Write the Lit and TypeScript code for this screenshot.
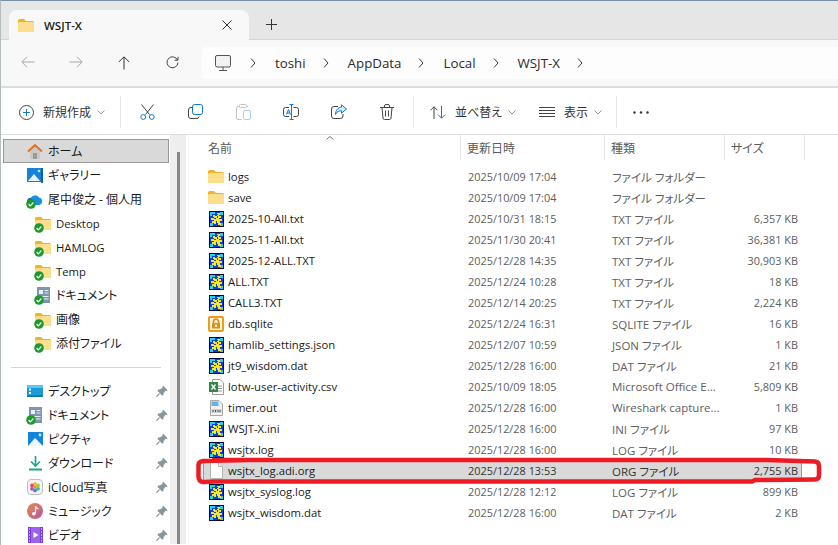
import { LitElement, html, css, TemplateResult } from "lit";
import { customElement } from "lit/decorators.js";

const folder = (w = 16, h = 13) => html`<svg class="ic" width=${w} height=${h} viewBox="0 0 16 13">
  <path d="M0 1.500Q0 0 1.500 0H6L8 2H14.500Q16 2 16 3.500V11.500Q16 13 14.500 13H1.500Q0 13 0 11.500Z" fill="#f0b429"/>
  <path d="M0 4.500Q0 3 1.500 3H14.500Q16 3 16 4.500V11.500Q16 13 14.500 13H1.500Q0 13 0 11.500Z" fill="#fcdf8d"/>
</svg>`;

const check = html`<svg class="chk" width="10" height="10" viewBox="0 0 10 10">
  <circle cx="5" cy="5" r="4.800" fill="#1c9a2c"/>
  <path d="M2.600 5.200L4.300 6.800L7.400 3.500" fill="none" stroke="#fff" stroke-width="1.200"/>
</svg>`;

const wsjt = html`<svg class="ic" width="15" height="16" viewBox="0 0 15 16" shape-rendering="crispEdges">
  <rect width="15" height="16" fill="#02023c"/>
  <rect x="1" y="1" width="13" height="14" fill="#0d3fe0"/>
  <rect x="1" y="1" width="5" height="2" fill="#20d6e6"/>
  <rect x="1" y="3" width="2" height="2" fill="#20d6e6"/>
  <rect x="11" y="1" width="3" height="3" fill="#20d6e6"/>
  <rect x="11" y="12" width="3" height="3" fill="#20d6e6"/>
  <rect x="1" y="12" width="3" height="3" fill="#20d6e6"/>
  <path d="M8 2h3v2h-1v1h2v2h-2v1h3v2h-2v2h1v2h-3v-2h-1v-2h-1v3h-2v-1h-2v-2h2v-1h-3v-2h3v-1h-1v-2h2v1h2v-1h1z" fill="#f7e81e"/>
  <rect x="5" y="7" width="2" height="1" fill="#0d3fe0"/>
  <rect x="8" y="5" width="1" height="2" fill="#0d3fe0"/>
</svg>`;

const sqlite = html`<svg class="ic" width="16" height="16" viewBox="0 0 16 16">
  <rect x="1" y="1" width="14" height="14" rx="1" fill="#fff6e2" stroke="#ee9d16" stroke-width="2"/>
  <path d="M5.500 7.500V5.500a2.500 2.500 0 0 1 5 0V7.500" fill="none" stroke="#d98a10" stroke-width="1.600"/>
  <rect x="4" y="7" width="8" height="5.500" fill="#e0920f"/>
  <rect x="7" y="8.500" width="2" height="2.500" fill="#fff6e2"/>
</svg>`;

const excel = html`<svg class="ic" width="15" height="16" viewBox="0 0 15 16">
  <path d="M3.500.5H11L14.500 4V15.500H3.500Z" fill="#fff" stroke="#9a9a9a"/>
  <path d="M9 7h4M9 9.500h4M9 12h4" stroke="#9a9a9a"/>
  <rect x="0" y="3" width="9" height="10" fill="#2f8a45"/>
  <path d="M2.500 5.500L6.500 10.500M6.500 5.500L2.500 10.500" stroke="#fff" stroke-width="1.300"/>
</svg>`;

const binary = html`<svg class="ic" width="13" height="16" viewBox="0 0 13 16">
  <path d="M.5.5H9L12.500 4V15.500H.5Z" fill="#eef2f6" stroke="#a8a8a8"/>
  <path d="M1.500 1.500H8.500V6H1.500Z" fill="#6aaee6"/>
  <path d="M1.500 9H11.500V13H1.500Z" fill="#cfcfcf"/>
  <path d="M3 10v2M5.500 10v2M8 10v2M10 10v2" stroke="#555" stroke-width="1"/>
</svg>`;

const blank = html`<svg class="ic" width="13" height="17" viewBox="0 0 13 17">
  <path d="M.5.5H8.500L12.500 4.500V16.500H.5Z" fill="#fff" stroke="#b5b5b5"/>
  <path d="M8.500.5V4.500H12.500" fill="#f0f0f0" stroke="#b5b5b5"/>
</svg>`;

const home = html`<svg class="ic" width="16" height="15" viewBox="0 0 16 15">
  <path d="M3 7V15H13V7L8 2.500Z" fill="#c9c9c9"/>
  <rect x="6" y="9" width="4" height="6" fill="#9a9a9a"/>
  <path d="M1 7.500L8 1.200L15 7.500" fill="none" stroke="#e2711d" stroke-width="2"/>
</svg>`;

const gallery = html`<svg class="ic" width="16" height="16" viewBox="0 0 16 16">
  <rect width="16" height="14" y="1" fill="#1583d8"/>
  <rect x="14" y="1" width="2" height="15" fill="#0c5fa8"/>
  <path d="M1 14L7 7L13 14Z" fill="#eaf4fc"/>
  <circle cx="12" cy="4" r="1.300" fill="#cfe8fa"/>
</svg>`;

const cloud = html`<svg class="ic" width="16" height="11" viewBox="0 0 16 11">
  <path d="M4 11a3.500 3.500 0 0 1-.5-7A5 5 0 0 1 12 3.500a3.800 3.800 0 0 1 0 7.500Z" fill="#1b8fe6"/>
  <path d="M4 11a3.500 3.500 0 0 1-.5-7L7 8 5 11Z" fill="#1650b8"/>
</svg>`;

const docs = html`<svg class="ic" width="13" height="16" viewBox="0 0 13 16">
  <rect width="13" height="16" fill="#7d95ae"/>
  <rect x="2" y="3" width="4" height="4" fill="#e8eef4"/>
  <path d="M7.500 3.500h4M7.500 6h4M2 9.500h9.500M2 12h9.500" stroke="#e8eef4"/>
</svg>`;

const desktopIc = html`<svg class="ic" width="16" height="12" viewBox="0 0 16 12">
  <rect width="16" height="12" rx="1" fill="#1b9ad6"/>
  <rect y="0" width="16" height="3" fill="#5cc6ee"/>
  <rect x="2" y="3.500" width="2" height="2" fill="#fff"/>
  <rect x="2" y="7" width="2" height="2" fill="#fff"/>
  <rect y="10.500" width="16" height="1.500" fill="#0f6fa5"/>
</svg>`;

const pictures = html`<svg class="ic" width="15" height="14" viewBox="0 0 15 14">
  <rect width="15" height="14" fill="#1583d8"/>
  <path d="M0 14L7 6L15 14Z" fill="#eef6fc"/>
  <circle cx="12" cy="3" r="1.400" fill="#cfe8fa"/>
</svg>`;

const download = html`<svg class="ic" width="13" height="15" viewBox="0 0 13 15">
  <path d="M6.500 0V9M2 5.500L6.500 10L11 5.500" fill="none" stroke="#1ca58f" stroke-width="1.700"/>
  <rect y="12.500" width="13" height="2" fill="#1ca58f"/>
</svg>`;

const icloud = html`<svg class="ic" width="16" height="16" viewBox="0 0 16 16">
  <rect x=".5" y=".5" width="15" height="15" rx="3.500" fill="#f4f4f4" stroke="#bdbdbd"/>
  <circle cx="8" cy="4.800" r="1.900" fill="#f5b82e"/>
  <circle cx="11" cy="6.500" r="1.900" fill="#9ccb3c"/>
  <circle cx="11" cy="9.800" r="1.900" fill="#3fb6a8"/>
  <circle cx="8" cy="11.400" r="1.900" fill="#4f81d8"/>
  <circle cx="5" cy="9.800" r="1.900" fill="#9560c8"/>
  <circle cx="5" cy="6.500" r="1.900" fill="#e6486a"/>
  <circle cx="8" cy="8" r="1.500" fill="#f0803a"/>
</svg>`;

const music = html`<svg class="ic" width="16" height="16" viewBox="0 0 16 16">
  <defs><linearGradient id="mg" x1="0" y1="0" x2="1" y2="1"><stop offset="0" stop-color="#ea8a4f"/><stop offset="1" stop-color="#b0589a"/></linearGradient></defs>
  <circle cx="8" cy="8" r="8" fill="url(#mg)"/>
  <path d="M8.500 3.500V10.500" stroke="#fff" stroke-width="1.200"/>
  <path d="M8.500 3.500Q9.500 5.500 11.500 5.800" fill="none" stroke="#fff" stroke-width="1.200"/>
  <circle cx="6.800" cy="10.800" r="1.800" fill="#fff"/>
</svg>`;

const video = html`<svg class="ic" width="15" height="16" viewBox="0 0 15 16">
  <rect width="15" height="16" fill="#7a3fd6"/>
  <rect x="3" y="0" width="9" height="16" fill="#9a63ea"/>
  <path d="M5.500 5L10.500 8L5.500 11Z" fill="#fff"/>
  <path d="M1 2h1M1 5h1M1 8h1M1 11h1M1 14h1M13 2h1M13 5h1M13 8h1M13 11h1M13 14h1" stroke="#fff" stroke-width="1.200"/>
</svg>`;

const pin = html`<svg width="12" height="12" viewBox="0 0 12 12">
  <path d="M7 .5L11.700 5.200L10.500 6L9.500 5.800L7.500 8.300L7.500 10L6.300 10.800L1.300 5.800L2.200 4.600L4 4.600L6.600 2.600L6.400 1.500Z" fill="#8b959c"/>
  <path d="M3.500 8.600L.5 11.600" stroke="#8b959c" stroke-width="1.300"/>
</svg>`;

const chev = html`<svg class="chev" width="8" height="5" viewBox="0 0 8 5"><path d="M.5.500L4 4L7.500.500" fill="none" stroke="#9a9a9a"/></svg>`;
const crumbSep = html`<svg class="sep" width="6" height="10" viewBox="0 0 6 10"><path d="M1 .5L5 5L1 9.500" fill="none" stroke="#3a3a3a"/></svg>`;

interface Row { n: string; d: string; t: string; s: string; i: TemplateResult; sel?: boolean; }
const rows: Row[] = [
  { n: "logs", d: "2025/10/09 17:04", t: "ファイル フォルダー", s: "", i: folder() },
  { n: "save", d: "2025/10/09 17:04", t: "ファイル フォルダー", s: "", i: folder() },
  { n: "2025-10-All.txt", d: "2025/10/31 18:15", t: "TXT ファイル", s: "6,357 KB", i: wsjt },
  { n: "2025-11-All.txt", d: "2025/11/30 20:41", t: "TXT ファイル", s: "36,381 KB", i: wsjt },
  { n: "2025-12-ALL.TXT", d: "2025/12/28 14:35", t: "TXT ファイル", s: "30,903 KB", i: wsjt },
  { n: "ALL.TXT", d: "2025/12/24 10:28", t: "TXT ファイル", s: "18 KB", i: wsjt },
  { n: "CALL3.TXT", d: "2025/12/14 20:25", t: "TXT ファイル", s: "2,224 KB", i: wsjt },
  { n: "db.sqlite", d: "2025/12/24 16:31", t: "SQLITE ファイル", s: "16 KB", i: sqlite },
  { n: "hamlib_settings.json", d: "2025/12/07 10:59", t: "JSON ファイル", s: "1 KB", i: wsjt },
  { n: "jt9_wisdom.dat", d: "2025/12/28 16:00", t: "DAT ファイル", s: "21 KB", i: wsjt },
  { n: "lotw-user-activity.csv", d: "2025/10/09 18:05", t: "Microsoft Office E...", s: "5,809 KB", i: excel },
  { n: "timer.out", d: "2025/12/28 16:00", t: "Wireshark capture...", s: "1 KB", i: binary },
  { n: "WSJT-X.ini", d: "2025/12/28 16:00", t: "INI ファイル", s: "97 KB", i: wsjt },
  { n: "wsjtx.log", d: "2025/12/28 16:00", t: "LOG ファイル", s: "10 KB", i: wsjt },
  { n: "wsjtx_log.adi.org", d: "2025/12/28 13:53", t: "ORG ファイル", s: "2,755 KB", i: blank, sel: true },
  { n: "wsjtx_syslog.log", d: "2025/12/28 12:12", t: "LOG ファイル", s: "899 KB", i: wsjt },
  { n: "wsjtx_wisdom.dat", d: "2025/12/28 16:00", t: "DAT ファイル", s: "2 KB", i: wsjt },
];

interface Nav { n: string; i: TemplateResult; sub?: boolean; ok?: boolean; pin?: boolean; cur?: boolean; }
const navTop: Nav[] = [
  { n: "ホーム", i: home, cur: true },
  { n: "ギャラリー", i: gallery },
  { n: "尾中俊之 - 個人用", i: cloud, ok: true },
  { n: "Desktop", i: folder(), sub: true, ok: true },
  { n: "HAMLOG", i: folder(), sub: true, ok: true },
  { n: "Temp", i: folder(), sub: true, ok: true },
  { n: "ドキュメント", i: docs, sub: true, ok: true },
  { n: "画像", i: folder(), sub: true, ok: true },
  { n: "添付ファイル", i: folder(), sub: true, ok: true },
];
const navPins: Nav[] = [
  { n: "デスクトップ", i: desktopIc, pin: true },
  { n: "ドキュメント", i: docs, ok: true, pin: true },
  { n: "ピクチャ", i: pictures, pin: true },
  { n: "ダウンロード", i: download, pin: true },
  { n: "iCloud写真", i: icloud, pin: true },
  { n: "ミュージック", i: music, pin: true },
  { n: "ビデオ", i: video, pin: true },
];

@customElement("app-root")
export class AppRoot extends LitElement {
  static styles = css`
    :host {
      display: block; width: 838px; height: 545px; overflow: hidden; position: relative;
      background: #fff; color: #1a1a1a;
      font-family: "Open Sans", "Noto Sans CJK JP", sans-serif; font-size: 12px;
      font-feature-settings: "palt";
      box-sizing: border-box; border-top: 1px solid #7b90a5; border-left: 1px solid #b4bcbc;
    }
    svg { display: block; flex: none; }
    .tabs { height: 38px; background: #e6e6e6; border-bottom: 1px solid #d4d4d4; display: flex; align-items: flex-end; padding-left: 8px; box-sizing: content-box; }
    .tab { width: 240px; height: 30px; background: #f8f8f8; border-radius: 8px 8px 0 0; display: flex; align-items: center; padding: 0 17px 0 9px; box-sizing: border-box; margin-bottom: -1px; }
    .tab .title { margin-left: 10px; flex: 1; font-weight: 600; color: #222; font-size: 11.500px; }
    .plus { margin: 0 0 9px 17px; }
    .addr { height: 48px; background: #f8f8f8; border-bottom: 2px solid #dcdcdc; display: flex; align-items: center; box-sizing: border-box; }
    .navbtn { width: 48px; display: flex; justify-content: center; }
    .navs { display: flex; padding-left: 3px; width: 201px; box-sizing: border-box; }
    .crumbs { flex: 1; height: 32px; background: #fdfdfd; border-radius: 4px 0 0 4px; display: flex; align-items: center; padding-left: 13px; font-size: 13.300px; color: #2b2b2b; }
    .crumbs span { white-space: nowrap; }
    .crumbs .sep { margin: 0 19px 0 17px; }
    .crumbs .pc { margin-right: 2px; }
    .tools { height: 47px; border-bottom: 1px solid #dedede; display: flex; align-items: center; box-sizing: border-box; padding-top: 2px; white-space: nowrap; }
    .vsep { width: 1px; height: 32px; background: #e6e6e6; flex: none; }
    .new { display: flex; align-items: center; width: 119px; padding-left: 18px; box-sizing: border-box; color: #333; }
    .new .lbl { margin: 0 6px 0 9px; }
    .slots { display: flex; padding: 0 2px; }
    .slot { width: 48px; display: flex; justify-content: center; }
    .grp { display: flex; align-items: center; color: #333; }
    .grp .lbl { margin: 0 6px 0 9px; }
    .sort { margin-left: 16px; width: 109px; }
    .view { width: 77px; }
    .dots { margin-left: 16px; }
    .body { display: flex; height: 409px; overflow: hidden; }
    .side { width: 169px; flex: none; padding: 4px 0 0 2px; box-sizing: border-box; }
    .item { height: 24px; width: 166px; display: flex; align-items: center; box-sizing: border-box; padding-left: 24px; position: relative; white-space: nowrap; color: #1a1a1a; }
    .item.sub { padding-left: 32px; }
    .item.cur { background: #d9d9d9; border: 1px solid #999; padding-left: 23px; }
    .latin { font-size: 11.300px; }
    .iconbox { width: 16px; height: 16px; display: flex; align-items: center; justify-content: center; position: relative; flex: none; margin-right: 5px; }
    .chk { position: absolute; left: -1px; bottom: -2px; }
    .item .pin { position: absolute; right: 1px; top: 6px; }
    .hr { height: 1px; background: #d6d6d6; margin: 12px 0 11px 8px; width: 150px; }
    .scroll { width: 16px; flex: none; background: #eee; padding: 17px 0 0 7px; box-sizing: border-box; }
    .thumb { width: 3px; height: 100%; background: #888; }
    .main { flex: 1; padding-left: 15px; border-left: 1px solid #f7f7f7; margin-left: 2px; min-width: 0; position: relative; }
    .cols { display: grid; grid-template-columns: 258px 144px 120px 80px; width: 602px; }
    .head { height: 25px; color: #5a5a5a; margin-left: -1px; }
    .head > div { border-right: 1px solid #e6e6e6; padding-left: 6px; line-height: 28px; height: 25px; box-sizing: border-box; position: relative; }
    .head > div:first-child { padding-left: 5px; }
    .caret { position: absolute; left: 123px; top: 1px; }
    .list { margin-top: 6px; }
    .row { height: 21px; align-items: center; color: #5e5e5e; box-sizing: border-box; margin-left: -1px; white-space: nowrap; font-size: 10.900px; }
    .row > div { padding-left: 7px; box-sizing: border-box; overflow: hidden; }
    .row .type { font-size: 11.500px; }
    .row .name { display: flex; align-items: center; padding-left: 5px; color: #1a1a1a; overflow: visible; font-size: 11.300px; }
    .row .iconbox { margin-right: 4px; }
    .row .size { text-align: right; padding: 0 7px 0 0; }
    .row.sel { background: #d9d9d9; border: 1px solid #999; border-width: 0 1px; color: #333; width: 599px; grid-template-columns: 257px 144px 120px 80px; }
    .row.sel .name { padding-left: 4px; }
    .ink { position: absolute; left: -1px; top: -1px; pointer-events: none; }
  `;

  private nav(n: Nav) {
    const latin = /^[\x20-\x7e]+$/.test(n.n);
    return html`<div class="item ${n.sub ? "sub" : ""} ${n.cur ? "cur" : ""}">
      <span class="iconbox">${n.i}${n.ok ? check : ""}</span><span class=${latin ? "latin" : ""}>${n.n}</span>
      ${n.pin ? html`<span class="pin">${pin}</span>` : ""}
    </div>`;
  }

  render() {
    return html`
      <div class="tabs">
        <div class="tab">
          ${folder(16, 13)}
          <span class="title">WSJT-X</span>
          <svg width="10" height="10" viewBox="0 0 10 10"><path d="M.5.5L9.500 9.500M9.500.5L.5 9.500" stroke="#333" fill="none"/></svg>
        </div>
        <svg class="plus" width="11" height="11" viewBox="0 0 11 11"><path d="M5.500 0V11M0 5.500H11" stroke="#333"/></svg>
      </div>
      <div class="addr">
        <div class="navs">
          <div class="navbtn"><svg width="14" height="12" viewBox="0 0 14 12"><path d="M13.500 6H1M6 .8L.8 6L6 11.200" fill="none" stroke="#a6a6a6"/></svg></div>
          <div class="navbtn"><svg width="14" height="12" viewBox="0 0 14 12"><path d="M.5 6H13M8 .8L13.200 6L8 11.200" fill="none" stroke="#a6a6a6"/></svg></div>
          <div class="navbtn"><svg width="12" height="14" viewBox="0 0 12 14"><path d="M6 13.500V1M.8 6L6 .8L11.200 6" fill="none" stroke="#333"/></svg></div>
          <div class="navbtn"><svg width="13" height="13" viewBox="0 0 13 13"><path d="M11.500 4A5.500 5.500 0 1 0 12 6.500" fill="none" stroke="#444"/><path d="M8.500 4.200H12V.8" fill="none" stroke="#444"/></svg></div>
        </div>
        <div class="crumbs">
          <svg class="pc" width="16" height="16" viewBox="0 0 16 16"><rect x=".5" y=".5" width="15" height="11.500" rx="1.500" fill="#f2f2f2" stroke="#555"/><path d="M8 12V15M4 15.500H12" stroke="#555"/></svg>
          ${crumbSep}<span>toshi</span>${crumbSep}<span>AppData</span>${crumbSep}<span>Local</span>${crumbSep}<span>WSJT-X</span>${crumbSep}
        </div>
      </div>
      <div class="tools">
        <div class="new">
          <svg width="15" height="15" viewBox="0 0 15 15"><circle cx="7.500" cy="7.500" r="7" fill="none" stroke="#444"/><path d="M7.500 4V11M4 7.500H11" stroke="#0a78d4"/></svg>
          <span class="lbl">新規作成</span>${chev}
        </div>
        <div class="vsep"></div>
        <div class="slots">
          <div class="slot"><svg width="15" height="16" viewBox="0 0 15 16"><path d="M1.500.5L9.500 10.500M13.500.5L5.500 10.500" stroke="#444" fill="none"/><circle cx="3.200" cy="13" r="2.400" fill="none" stroke="#0a78d4"/><circle cx="11.800" cy="13" r="2.400" fill="none" stroke="#0a78d4"/></svg></div>
          <div class="slot"><svg width="15" height="15" viewBox="0 0 15 15"><rect x="4.500" y=".5" width="10" height="10" rx="2" fill="none" stroke="#0a78d4"/><path d="M4.500 3.500H3A2.500 2.500 0 0 0 .5 6V12A2.500 2.500 0 0 0 3 14.500H8A2.500 2.500 0 0 0 11 12.500" fill="none" stroke="#444"/></svg></div>
          <div class="slot"><svg width="15" height="16" viewBox="0 0 15 16"><path d="M4 2.500H2A1.500 1.500 0 0 0 .5 4V14A1.500 1.500 0 0 0 2 15.500H6M10 2.500H12" fill="none" stroke="#c4c4c4"/><rect x="3.500" y=".5" width="7" height="3" rx="1" fill="none" stroke="#c4c4c4"/><rect x="7.500" y="6.500" width="7" height="9" rx="1.500" fill="none" stroke="#a8d0f0"/></svg></div>
          <div class="slot"><svg width="16" height="16" viewBox="0 0 16 16"><path d="M6 3.500H2.500A2 2 0 0 0 .5 5.500V10.500A2 2 0 0 0 2.500 12.500H6M10.500 3.500H13.500A2 2 0 0 1 15.500 5.500V10.500A2 2 0 0 1 13.500 12.500H10.500" fill="none" stroke="#444"/><path d="M6.500.5H10.500M6.500 15.500H10.500M8.500.5V15.500" stroke="#0a78d4" fill="none"/><path d="M3.500 10.500L5.500 5.500L7.500 10.500M4.200 9H6.800" fill="none" stroke="#0a78d4"/></svg></div>
          <div class="slot"><svg width="16" height="15" viewBox="0 0 16 15"><path d="M7 2.500H3A2.500 2.500 0 0 0 .5 5V12A2.500 2.500 0 0 0 3 14.500H9.500A2.500 2.500 0 0 0 12 12V10" fill="none" stroke="#444"/><path d="M10.500.8L15.500 5L10.500 9.200V6.800C8 6.800 6 7.500 4.500 10.500C4.500 6.500 7 3.500 10.500 3.200Z" fill="#d8ebfa" stroke="#0a78d4"/></svg></div>
          <div class="slot"><svg width="14" height="16" viewBox="0 0 14 16"><path d="M0 3.500H14M4.500 3.500V2A1.500 1.500 0 0 1 6 .5H8A1.500 1.500 0 0 1 9.500 2V3.500M2 3.500L3 14A1.500 1.500 0 0 0 4.500 15.500H9.500A1.500 1.500 0 0 0 11 14L12 3.500M5.500 6.500V12.500M8.500 6.500V12.500" fill="none" stroke="#444"/></svg></div>
        </div>
        <div class="vsep"></div>
        <div class="grp sort">
          <svg width="16" height="13" viewBox="0 0 16 13"><path d="M4 13V.8M.5 4.300L4 .8L7.500 4.300" fill="none" stroke="#444"/><path d="M11.500 0V12.200M8 8.700L11.500 12.200L15 8.700" fill="none" stroke="#0a78d4"/></svg>
          <span class="lbl">並べ替え</span>${chev}
        </div>
        <div class="grp view">
          <svg width="16" height="10" viewBox="0 0 16 10"><path d="M0 .5H16M0 3.500H16M0 6.500H16M0 9.500H16" stroke="#444"/></svg>
          <span class="lbl">表示</span>${chev}
        </div>
        <div class="vsep"></div>
        <svg class="dots" width="16" height="3" viewBox="0 0 16 3"><circle cx="1.500" cy="1.500" r="1.200" fill="#333"/><circle cx="8" cy="1.500" r="1.200" fill="#333"/><circle cx="14.500" cy="1.500" r="1.200" fill="#333"/></svg>
      </div>
      <div class="body">
        <div class="side">
          ${navTop.map((n) => this.nav(n))}
          <div class="hr"></div>
          ${navPins.map((n) => this.nav(n))}
        </div>
        <div class="scroll"><div class="thumb"></div></div>
        <div class="main">
          <div class="cols head">
            <div>名前<svg class="caret" width="8" height="4" viewBox="0 0 8 4"><path d="M.5 3.500L4 .5L7.500 3.500" fill="none" stroke="#777"/></svg></div>
            <div>更新日時</div><div>種類</div><div>サイズ</div>
          </div>
          <div class="list">
            ${rows.map((r) => html`<div class="cols row ${r.sel ? "sel" : ""}">
              <div class="name"><span class="iconbox">${r.i}</span><span>${r.n}</span></div>
              <div>${r.d}</div><div class="type">${r.t}</div><div class="size">${r.s}</div>
            </div>`)}
          </div>
        </div>
      </div>
      <svg class="ink" width="838" height="545" viewBox="0 0 838 545">
        <path d="M212 460H767L815 461.500Q819 462 819 466V475Q819 479.500 815 479.500L755 480L752 481.500H214L205 482H203Q198.500 481.500 198.500 476V465Q198.500 461.500 203 461L250 460"
          fill="none" stroke="#ed1c24" stroke-width="4.500" stroke-linejoin="round"/>
      </svg>
    `;
  }
}
